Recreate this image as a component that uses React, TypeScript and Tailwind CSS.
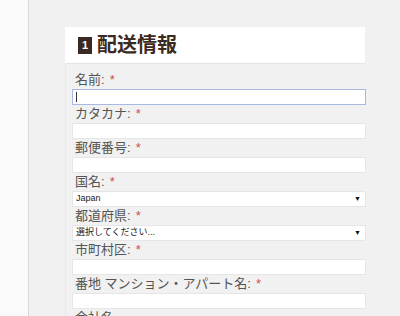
import React from "react";

const fields = [
  { label: "名前:", type: "input", focus: true },
  { label: "カタカナ:", type: "input" },
  { label: "郵便番号:", type: "input" },
  { label: "国名:", type: "select", value: "Japan" },
  { label: "都道府県:", type: "select", value: "選択してください..." },
  { label: "市町村区:", type: "input" },
  { label: "番地 マンション・アパート名:", type: "input" },
  { label: "会社名", type: "input", noStar: true },
];

function Field({ f }: { f: (typeof fields)[number] }) {
  return (
    <div className="flex shrink-0 flex-col">
      <div className="h-[18px] shrink-0 pl-[3px] text-[13px] leading-[18px] text-[#555] whitespace-nowrap">
        {f.label}
        {!f.noStar && <span className="ml-[5px] text-[#c9524a]">*</span>}
      </div>
      {f.type === "select" ? (
        <div className="flex h-[16px] shrink-0 items-center justify-between border border-[#e6e6e6] bg-white pl-[3px] pr-[4px] text-[9px] text-[#222]">
          <span>{f.value}</span>
          <span className="text-[7px] text-[#111]">▼</span>
        </div>
      ) : (
        <div
          className={
            f.focus
              ? "flex h-[16px] shrink-0 items-center border border-[#a6b9e2] bg-white pl-[3px]"
              : "h-[16px] shrink-0 border border-[#e6e6e6] bg-white"
          }
        >
          {f.focus && <span className="h-[10px] w-px bg-[#333]" />}
        </div>
      )}
    </div>
  );
}

export default function App() {
  return (
    <div
      className="flex h-[316px] w-[400px] overflow-hidden bg-[#f1f1f1]"
      style={{ fontFamily: '"Liberation Sans", "Noto Sans CJK JP", sans-serif' }}
    >
      <div className="w-[29px] shrink-0 border-r border-[#d9d9d9] bg-[#fafafa]" />
      <div className="flex flex-col pl-[36px] pt-[27px]">
        <div className="flex h-[37px] w-[300px] shrink-0 items-center gap-[5px] border-b border-[#e4e4e4] bg-white pl-[13px]">
          <span className="flex h-[17px] w-[14px] items-center justify-center bg-[#3b2a22] text-[11px] font-bold text-white">
            1
          </span>
          <span className="text-[20px] font-bold leading-none text-[#3b2a22]">配送情報</span>
        </div>
        <div className="flex w-[301px] shrink-0 flex-col border-l border-[#e8e8e8] pl-[6px] pt-[7px]">
          {fields.map((f) => (
            <Field key={f.label} f={f} />
          ))}
        </div>
      </div>
    </div>
  );
}
